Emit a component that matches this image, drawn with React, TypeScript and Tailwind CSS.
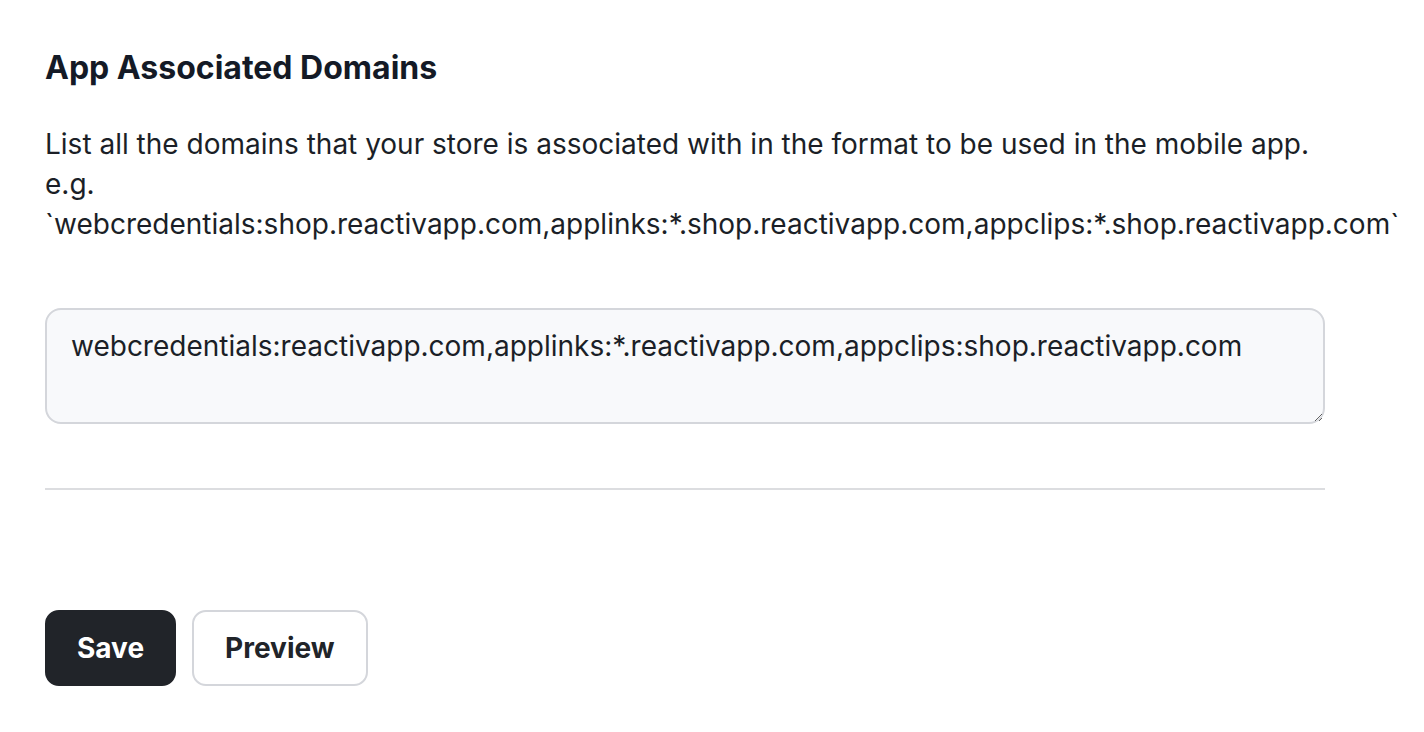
import { useState } from "react";

const DOMAINS_DEFAULT =
	"webcredentials:reactivapp.com,applinks:*.reactivapp.com,appclips:shop.reactivapp.com";

const App = () => {
	const [domains, setDomains] = useState(DOMAINS_DEFAULT);

	return (
		<div
			className="min-h-screen bg-white text-[#1b1f27]"
			style={{ fontFamily: "Inter, 'Noto Sans', sans-serif" }}>
			<main className="w-[1325px] pl-[45px] pt-[48px]">
				<h2 className="text-[32px] leading-[40px] font-bold text-[#141a26]">
					App Associated Domains
				</h2>
				<p className="mt-[36px] text-[28px] leading-[40px] whitespace-normal">
					List all the domains that your store is associated with in the format to be used in the mobile app.
					<br />
					e.g.
					<br />
					`webcredentials:shop.reactivapp.com,applinks:*.shop.reactivapp.com,appclips:*.shop.reactivapp.com`
				</p>
				<textarea
					className="mt-[64px] block w-full rounded-[16px] border-2 border-[#d4d6db] bg-[#f8f9fb] px-6 py-4 text-[28px] leading-[40px] text-[#1b1f27] outline-none"
					rows={2}
					value={domains}
					onChange={e => setDomains(e.target.value)}
				/>
				<hr className="mt-[64px] border-t-2 border-[#dcdde0]" />
				<div className="mt-[120px] flex gap-4">
					<button className="rounded-[14px] border-2 border-[#212429] bg-[#212429] px-[30px] py-4 text-[28px] leading-[40px] font-bold text-white">
						Save
					</button>
					<button className="rounded-[14px] border-2 border-[#d4d6db] bg-white px-[31px] py-4 text-[28px] leading-[40px] font-bold text-[#212429]">
						Preview
					</button>
				</div>
			</main>
		</div>
	);
};

export default App;
